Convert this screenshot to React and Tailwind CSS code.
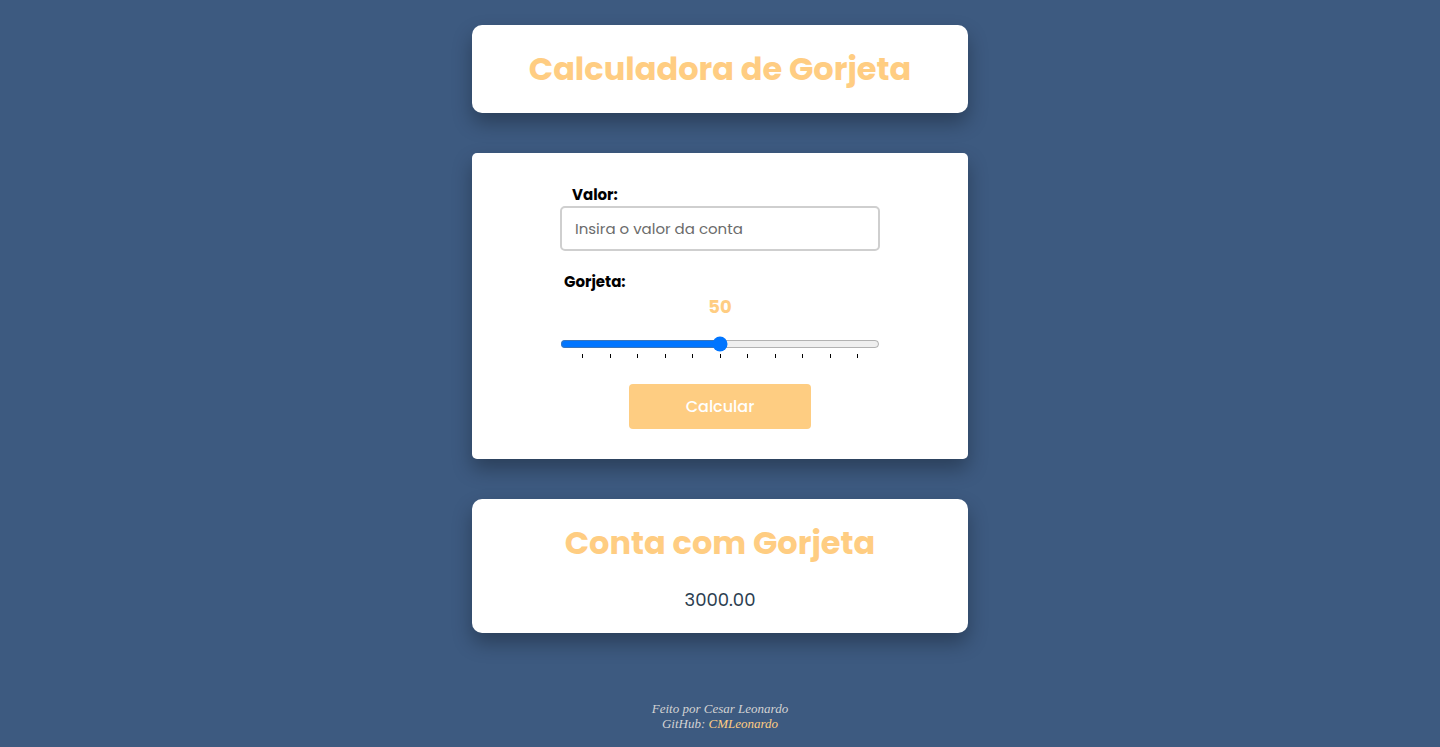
import React from "react";

export default function App() {
  const ticks = Array.from({ length: 11 });
  return (
    <div
      className="min-h-[747px] w-full bg-[#3d5a80] flex flex-col items-center pt-[25px]"
      style={{ fontFamily: "Poppins, Inter, 'Noto Sans', sans-serif" }}
    >
      <div className="w-[496px] h-[88px] bg-white rounded-[10px] shadow-[0_10px_20px_rgba(0,0,0,0.3)] flex items-center justify-center">
        <h1 className="text-[32px] font-bold text-[#ffcd82] leading-none">
          Calculadora de Gorjeta
        </h1>
      </div>

      <div className="mt-[40px] w-[496px] h-[306px] bg-white rounded-[5px] shadow-[0_10px_20px_rgba(0,0,0,0.3)] flex flex-col items-center pt-[32px]">
        <div className="w-[320px] flex flex-col">
          <label className="ml-[12px] text-[15px] font-bold text-black leading-[20px]">Valor:</label>
          <input
            type="text"
            placeholder="Insira o valor da conta"
            className="mt-[1px] h-[45px] w-[320px] border-2 border-[#cfcfcf] rounded-[5px] px-[13px] text-[15px] text-gray-700 placeholder:text-[#6b6b6b] outline-none"
          />
          <label className="mt-[21px] ml-[4px] text-[15px] font-bold text-black leading-[20px]">Gorjeta:</label>
          <div className="mt-[3px] text-center text-[18px] font-bold text-[#ffcd82] leading-[24px]">50</div>
          <div className="mt-[17px] relative w-[320px]">
            <input
              type="range"
              min="0"
              max="100"
              defaultValue="50"
              className="w-[320px] h-[16px] block m-0 accent-[#0075ff]"
            />
            <div className="flex justify-between px-[22px] mt-[2px]">
              {ticks.map((_, i) => (
                <div key={i} className="w-px h-[4px] bg-black" />
              ))}
            </div>
          </div>
          <div className="flex justify-center mt-[26px]">
            <button className="w-[182px] h-[45px] bg-[#fecd82] rounded-[4px] text-white text-[16px] font-medium">
              Calcular
            </button>
          </div>
        </div>
      </div>

      <div className="mt-[40px] w-[496px] h-[134px] bg-white rounded-[10px] shadow-[0_10px_20px_rgba(0,0,0,0.3)] flex flex-col items-center pt-[24px]">
        <h2 className="text-[32px] font-bold text-[#ffcd82] leading-[40px]">Conta com Gorjeta</h2>
        <p className="mt-[25px] text-[18px] text-[#2c3e50] leading-[24px]">3000.00</p>
      </div>

      <footer
        className="mt-[68px] text-center text-[13px] italic text-[#d3d3d3] leading-[15px]"
        style={{ fontFamily: "'Liberation Serif', serif" }}
      >
        <p>Feito por Cesar Leonardo</p>
        <p>
          GitHub: <a className="text-[#ffcd82]">CMLeonardo</a>
        </p>
      </footer>
    </div>
  );
}
